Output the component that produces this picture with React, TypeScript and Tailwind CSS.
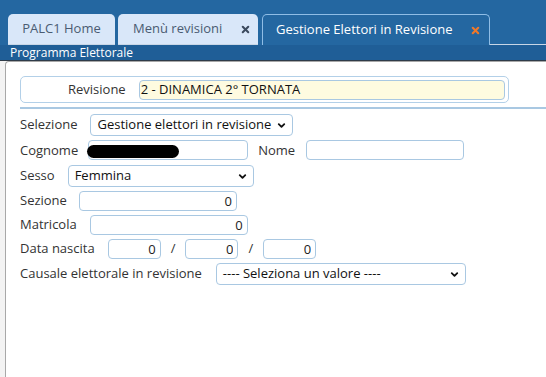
import { ChevronDown, X } from 'lucide-react'

const inputCls =
  'h-[20px] rounded-[4px] border border-[#a9c8e2] bg-white px-1 text-right text-[13px] text-[#222] outline-none'

function Select({ value, width }: { value: string; width: string }) {
  return (
    <div className={`relative flex h-[22px] items-center rounded-[4px] border border-[#a9c8e2] bg-white pl-[6px] ${width}`}>
      <span className="whitespace-nowrap text-[13px] text-[#111]">{value}</span>
      <ChevronDown className="absolute right-[5px] top-[5px] text-[#111]" size={11} strokeWidth={4} />
    </div>
  )
}

export default function App() {
  return (
    <div className="flex h-[377px] w-[546px] flex-col overflow-hidden bg-white font-['Open_Sans','Noto_Sans',sans-serif]">
      <div className="flex h-[45px] items-end bg-[#2467a1] pl-[8px]">
        <div className="flex h-[31px] w-[107px] items-center justify-center whitespace-nowrap rounded-t-[5px] border-b border-[#c8d6e6] bg-[#d9e7f9] text-[13px] text-[#4a5b72]">
          PALC1 Home
        </div>
        <div className="ml-[3px] flex h-[31px] w-[140px] items-center justify-between whitespace-nowrap rounded-t-[5px] border-b border-[#c8d6e6] bg-[#d9e7f9] pl-[15px] pr-[7px] text-[13px] text-[#4a5b72]">
          <span>Menù revisioni</span>
          <X size={11} strokeWidth={4.5} className="text-[#3c4a5e]" />
        </div>
        <div className="ml-[4px] flex h-[31px] w-[228px] items-center justify-between whitespace-nowrap rounded-t-[5px] border border-b-0 border-[#8fbde6] bg-[#2467a1] pl-[13px] pr-[8px] text-[13px] text-white">
          <span>Gestione Elettori in Revisione</span>
          <X size={11} strokeWidth={4.5} className="text-[#f0782a]" />
        </div>
        <div className="h-px flex-1 bg-[#c8d6e6]" />
      </div>
      <div className="flex h-[16px] items-center border-b border-[#2f3b48] bg-[#1f5e97] pl-[10px] text-[12px] leading-none text-white">
        Programma Elettorale
      </div>
      <div className="flex flex-1 bg-[#f3f3f3] pl-[5px]">
        <div className="flex-1 rounded-tl-[4px] border-l border-t border-[#a8a8a8] bg-white pt-[14px]">
          <div className="ml-[14px] flex h-[27px] w-[489px] items-center rounded-[5px] border border-[#b3d0e8] pl-[47px] pr-[3px]">
            <span className="text-[13px] text-[#333]">Revisione</span>
            <div className="ml-[13px] flex h-[20px] flex-1 items-center rounded-[4px] border border-[#a9c8e2] bg-[#fefbe0] pl-[1px] text-[13px] text-[#111]">
              2 - DINAMICA 2° TORNATA
            </div>
          </div>
          <div className="ml-[14px] mt-[4px] h-[2px] bg-[#a9c8e2]" />
          <div className="flex flex-col gap-[4px] pl-[14px] pt-[5px] text-[13px] text-[#333]">
            <div className="flex items-center">
              <span>Selezione</span>
              <div className="ml-[13px]">
                <Select value="Gestione elettori in revisione" width="w-[203px]" />
              </div>
            </div>
            <div className="flex items-center">
              <span>Cognome</span>
              <div className="relative ml-[10px]">
                <input className={`${inputCls} w-[160px]`} defaultValue="" />
                <span className="absolute left-[-1px] top-[5px] h-[13px] w-[92px] rounded-full bg-black" />
              </div>
              <span className="ml-[10px]">Nome</span>
              <input className={`${inputCls} ml-[11px] w-[158px]`} defaultValue="" />
            </div>
            <div className="flex items-center">
              <span>Sesso</span>
              <div className="ml-[13px]">
                <Select value="Femmina" width="w-[186px]" />
              </div>
            </div>
            <div className="flex items-center">
              <span>Sezione</span>
              <input className={`${inputCls} ml-[12px] w-[158px]`} defaultValue="0" />
            </div>
            <div className="flex items-center">
              <span>Matricola</span>
              <input className={`${inputCls} ml-[13px] w-[158px]`} defaultValue="0" />
            </div>
            <div className="flex items-center">
              <span>Data nascita</span>
              <input className={`${inputCls} ml-[13px] w-[53px]`} defaultValue="0" />
              <span className="mx-[10px]">/</span>
              <input className={`${inputCls} w-[53px]`} defaultValue="0" />
              <span className="mx-[10px]">/</span>
              <input className={`${inputCls} w-[53px]`} defaultValue="0" />
            </div>
            <div className="flex items-center">
              <span>Causale elettorale in revisione</span>
              <div className="ml-[14px]">
                <Select value="---- Seleziona un valore ----" width="w-[250px]" />
              </div>
            </div>
          </div>
        </div>
      </div>
    </div>
  )
}
